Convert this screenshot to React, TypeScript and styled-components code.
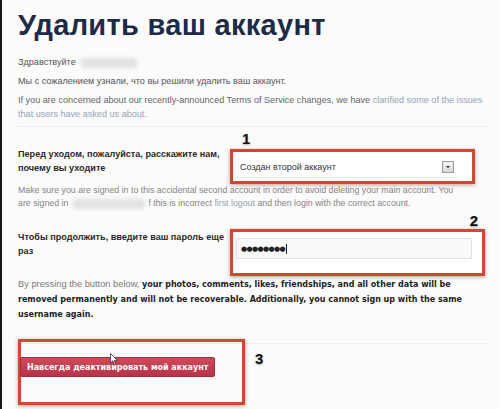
import styled, { createGlobalStyle } from "styled-components";

const GlobalStyle = createGlobalStyle`
  html, body {
    margin: 0;
    padding: 0;
    background: #fbfbfb;
  }
  body {
    font-family: "Liberation Sans", Arial, sans-serif;
  }
`;

const Page = styled.main`
  width: 499px;
  height: 409px;
  box-sizing: border-box;
  border-left: 2px solid #161616;
  padding: 8px 9px 0 16px;
  background: #fbfbfb;
  overflow: hidden;
`;

const Heading = styled.h1`
  margin: 0 0 13px;
  font-family: "Liberation Sans", Arial, sans-serif;
  font-size: 29px;
  font-weight: 700;
  line-height: 34px;
  color: #1d2b47;
  letter-spacing: 0.3px;
`;

const Para = styled.p<{ $tone?: string }>`
  margin: 0 0 5px;
  font-size: 9.1px;
  line-height: 14px;
  white-space: nowrap;
  color: ${(p) => p.$tone ?? "#555"};
`;

const Blurred = styled.span<{ $w: number }>`
  display: inline-block;
  vertical-align: middle;
  width: ${(p) => p.$w}px;
  height: 10px;
  margin-left: 4px;
  border-radius: 5px;
  background: #e2e2e2;
  filter: blur(2px);
`;

const Link = styled.a`
  color: #97a2b6;
  text-decoration: none;
`;

const Divider = styled.hr`
  margin: 2px 0 0;
  border: 0;
  border-top: 1px solid #ececec;
`;

const FormRow = styled.div<{ $gap: number }>`
  display: grid;
  grid-template-columns: 212px auto;
  justify-content: start;
  align-items: start;
  margin-top: ${(p) => p.$gap}px;
`;

const Label = styled.label`
  white-space: nowrap;
  font-family: "Liberation Sans", Arial, sans-serif;
  font-size: 9.1px;
  font-weight: 700;
  line-height: 14px;
  color: #2a2a2a;
`;

const Marked = styled.div<{ $w: number; $pad: string; $shift: number }>`
  position: relative;
  z-index: 1;
  width: ${(p) => p.$w}px;
  box-sizing: border-box;
  margin-top: ${(p) => p.$shift}px;
  padding: ${(p) => p.$pad};
  border: 3px solid #cd4a31;
  box-shadow: 0 1px 4px rgba(120, 40, 20, 0.45);
  background: #fff;
`;

const Number = styled.span<{ $right?: number; $left?: number; $top: number }>`
  position: absolute;
  top: ${(p) => p.$top}px;
  ${(p) => (p.$right !== undefined ? `right: ${p.$right}px;` : "")}
  ${(p) => (p.$left !== undefined ? `left: ${p.$left}px;` : "")}
  font-family: "Liberation Sans", Arial, sans-serif;
  font-size: 15px;
  line-height: 17px;
  font-weight: 700;
  color: #111;
  text-shadow: 0 1px 2px rgba(0, 0, 0, 0.3);
`;

const Select = styled.div`
  display: flex;
  align-items: center;
  justify-content: space-between;
  height: 20px;
  padding: 0 4px;
  border-bottom: 1px solid #e6e6e6;
  background: #fff;
  font-size: 9px;
  color: #333;
`;

const Arrow = styled.span`
  display: grid;
  place-items: center;
  width: 10px;
  height: 10px;
  border: 1px solid #9a9a9a;
  background: linear-gradient(#f4f4f4, #d8d8d8);
  &::after {
    content: "";
    border-left: 2px solid transparent;
    border-right: 2px solid transparent;
    border-top: 2px solid #222;
  }
`;

const Note = styled.p`
  margin: 0;
  font-size: 8.8px;
  line-height: 13px;
  white-space: nowrap;
  color: #858585;
`;

const Input = styled.div`
  display: flex;
  align-items: center;
  height: 21px;
  box-sizing: border-box;
  padding: 0 4px;
  border: 1px solid #e2e2e2;
  background: #f9f9f9;
  font-family: "DejaVu Sans", Verdana, sans-serif;
  font-size: 7px;
  letter-spacing: -0.6px;
  color: #222;
`;

const Caret = styled.span`
  display: inline-block;
  width: 1px;
  height: 10px;
  margin-left: 1px;
  background: #222;
`;

const Warning = styled.p`
  margin: 1px 0 0;
  font-size: 9.3px;
  line-height: 14px;
  white-space: nowrap;
  color: #7a7a7a;

  strong {
    font-family: "DejaVu Sans", Verdana, sans-serif;
    font-size: 8px;
    color: #222;
  }
`;

const Footer = styled.div`
  margin-top: 21px;
  border-top: 1px solid #ededed;
`;

const ButtonFrame = styled.div`
  position: relative;
  width: 227px;
  height: 66px;
  margin-top: -5px;
  box-sizing: border-box;
  padding-top: 15px;
  border: 3px solid #cd4a31;
  box-shadow: 0 1px 4px rgba(120, 40, 20, 0.45);
`;

const DangerButton = styled.button`
  display: block;
  margin-left: -1px;
  height: 20px;
  padding: 0 6px;
  border: 1px solid #a52a3a;
  border-radius: 2px;
  background: linear-gradient(#cf4a5c, #b8324a);
  font-family: "DejaVu Sans", Verdana, sans-serif;
  font-size: 8px;
  font-weight: 700;
  color: #fff;
  cursor: pointer;
`;

const Cursor = styled.svg`
  position: absolute;
  left: 89px;
  top: 11px;
`;

export default function App() {
  return (
    <>
      <GlobalStyle />
      <Page>
        <Heading>Удалить ваш аккаунт</Heading>
        <Para>
          Здравствуйте
          <Blurred $w={58} />
        </Para>
        <Para>Мы с сожалением узнали, что вы решили удалить ваш аккаунт.</Para>
        <Para $tone="#666">
          If you are concerned about our recently-announced Terms of Service changes, we have{" "}
          <Link href="#">
            clarified some of the issues
            <br />
            that users have asked us about.
          </Link>
        </Para>
        <Divider />

        <FormRow $gap={20}>
          <Label>
            Перед уходом, пожалуйста, расскажите нам,
            <br />
            почему вы уходите
          </Label>
          <Marked $w={245} $pad="5px 14px 3px 3px" $shift={2}>
            <Number $left={9} $top={-22}>1</Number>
            <Select>
              Создан второй аккаунт
              <Arrow />
            </Select>
          </Marked>
        </FormRow>
        <Note>
          Make sure you are signed in to this accidental second account in order to avoid deleting your main account. You
          <br />
          are signed in
          <Blurred $w={74} style={{ marginRight: 2 }} />
          f this is incorrect <Link href="#">first logout</Link> and then login with the correct account.
        </Note>

        <FormRow $gap={19}>
          <Label style={{ marginTop: 1 }}>
            Чтобы продолжить, введите ваш пароль еще
            <br />
            раз
          </Label>
          <Marked $w={255} $pad="6px 10px 14px 3px" $shift={0}>
            <Number $right={4} $top={-20}>2</Number>
            <Input>
              ●●●●●●●●
              <Caret />
            </Input>
          </Marked>
        </FormRow>

        <Warning>
          By pressing the button below,{" "}
          <strong>
            your photos, comments, likes, friendships, and all other data will be
            <br />
            removed permanently and will not be recoverable. Additionally, you cannot sign up with the same
            <br />
            username again.
          </strong>
        </Warning>

        <Footer>
          <ButtonFrame>
            <Number $left={234} $top={8}>3</Number>
            <DangerButton>Навсегда деактивировать мой аккаунт</DangerButton>
            <Cursor width="8" height="12" viewBox="0 0 8 12">
              <path
                d="M0.5 0.5 L0.5 10 L2.8 7.8 L4.3 11.3 L5.6 10.7 L4.2 7.4 L7.3 7.4 Z"
                fill="#fff"
                stroke="#333"
                strokeWidth="0.8"
              />
            </Cursor>
          </ButtonFrame>
        </Footer>
      </Page>
    </>
  );
}
